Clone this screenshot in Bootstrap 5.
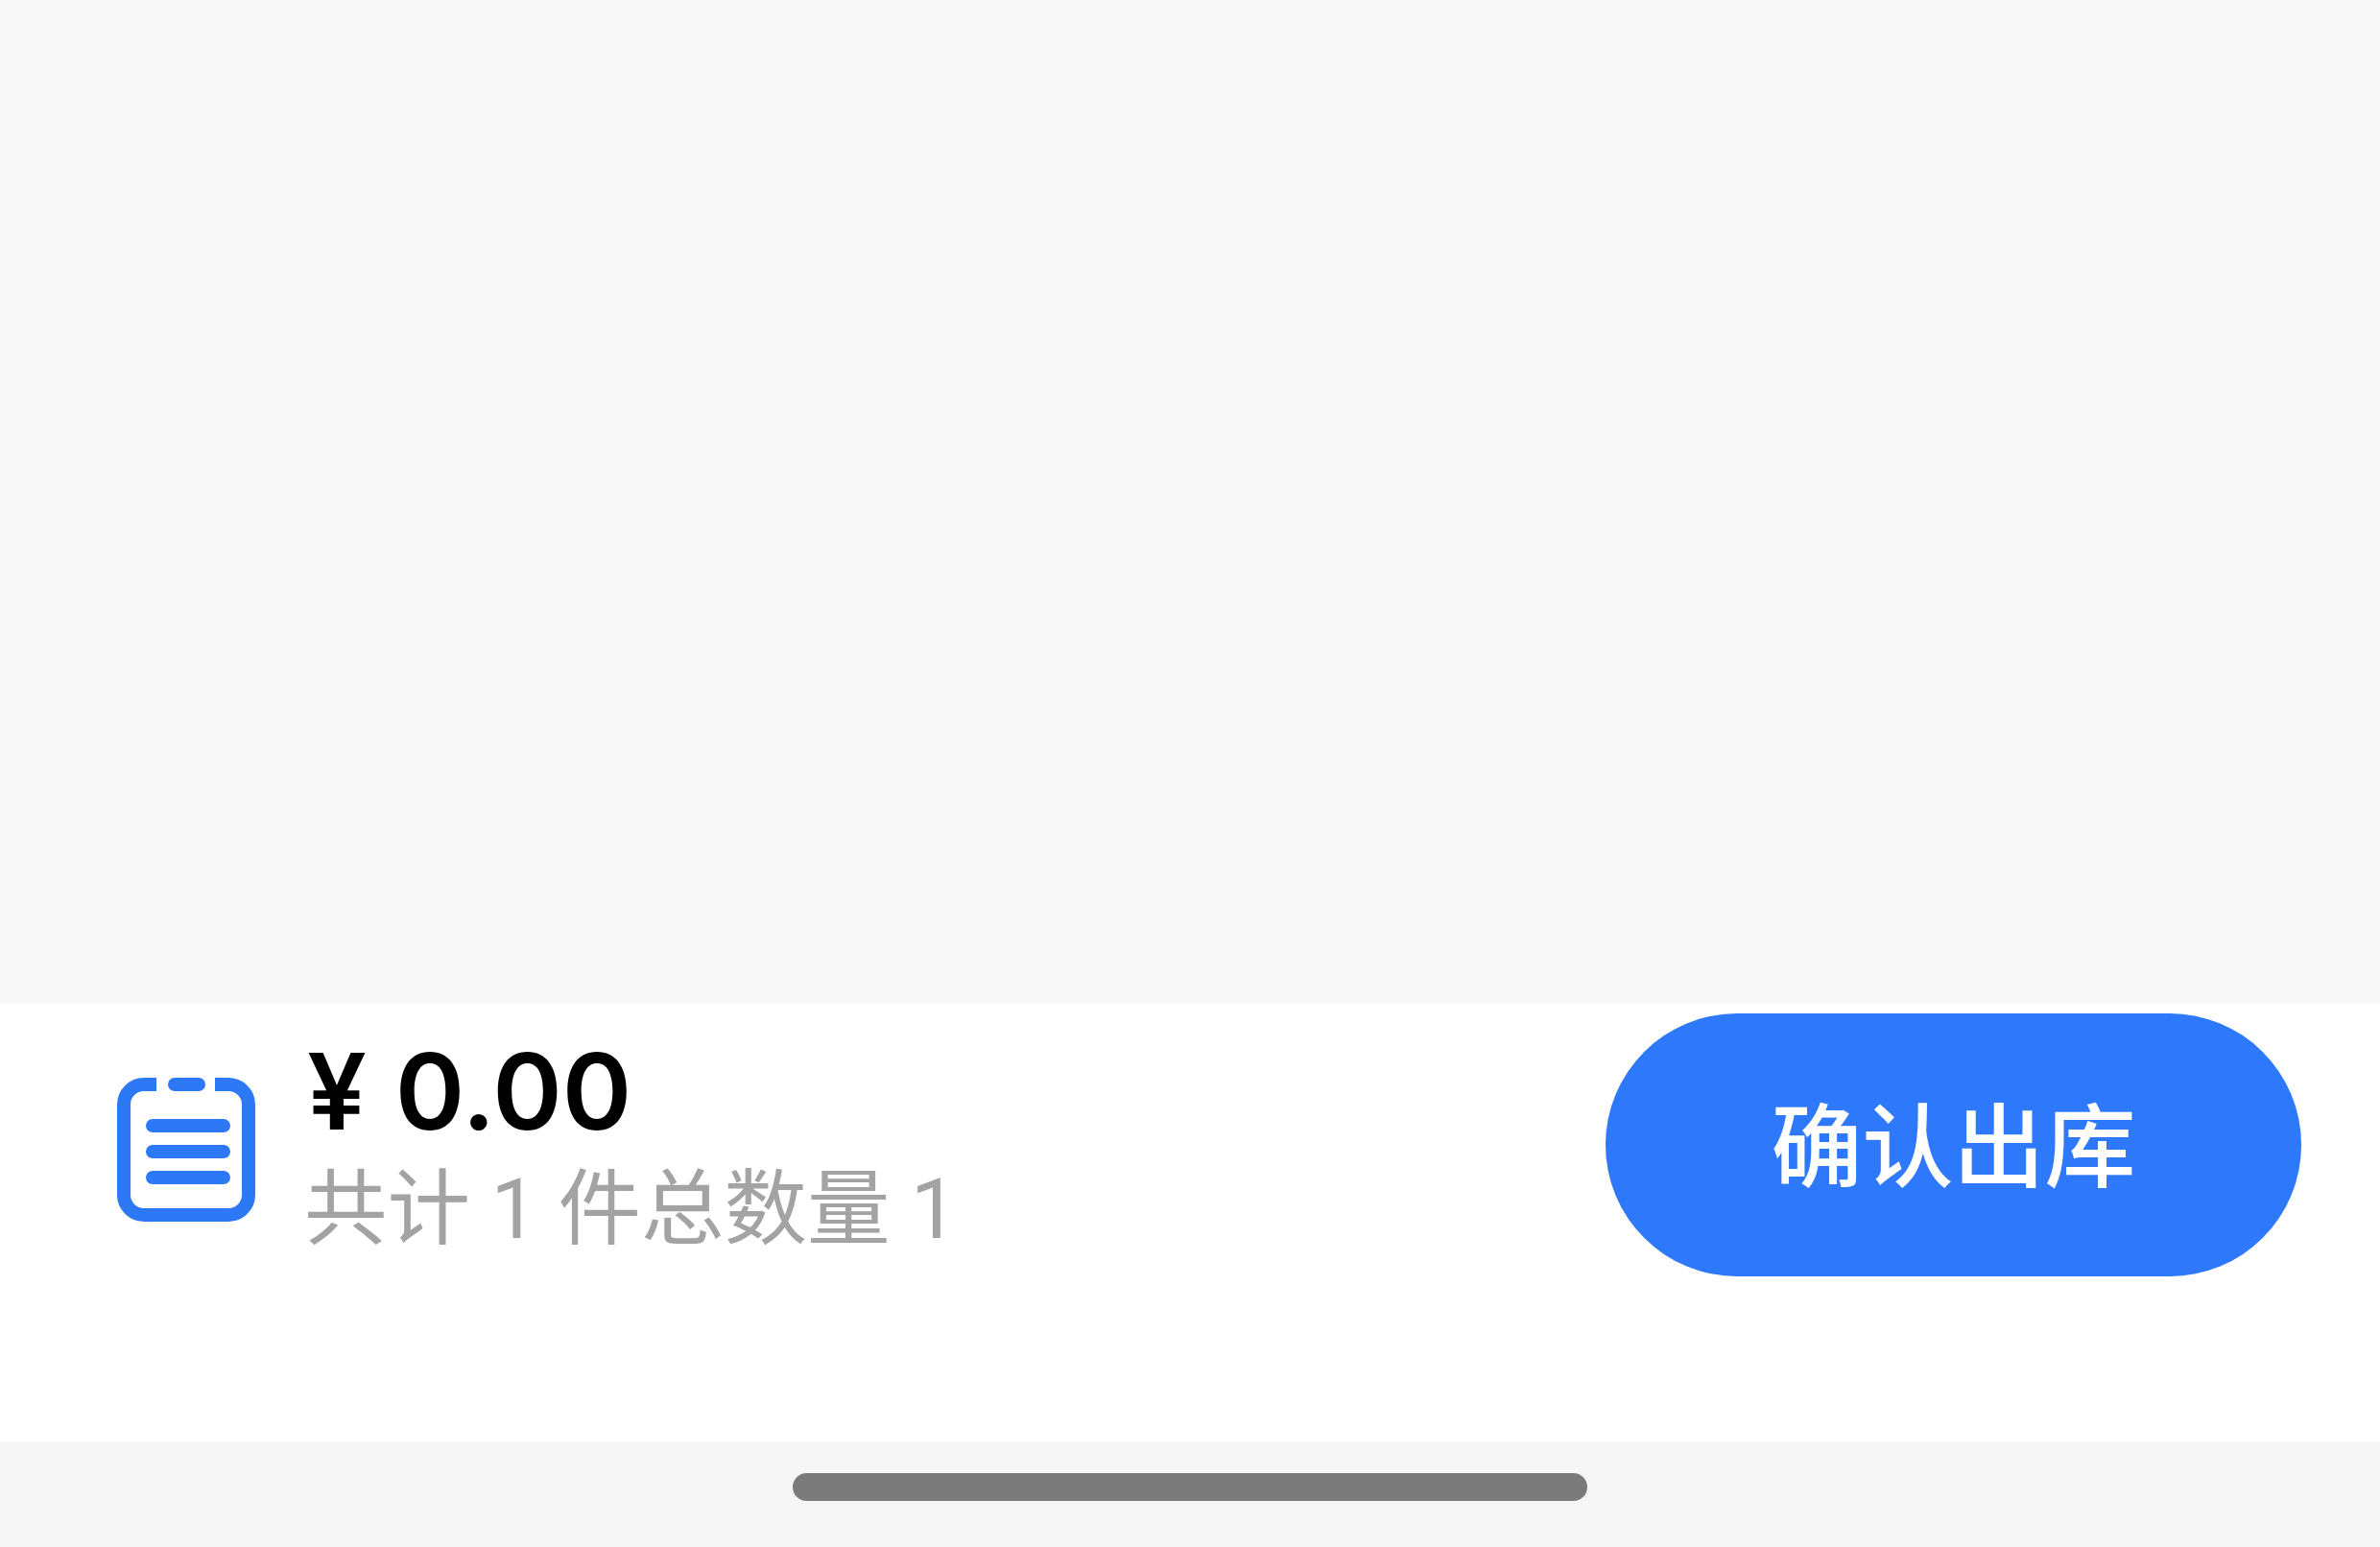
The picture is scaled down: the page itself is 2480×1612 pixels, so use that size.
<!DOCTYPE html>
<html lang="zh-CN">
<head>
<meta charset="utf-8">
<title>确认出库</title>
<link href="https://cdn.jsdelivr.net/npm/bootstrap@5.3.0/dist/css/bootstrap.min.css" rel="stylesheet">
<style>
html, body { height: 1612px; margin: 0; }
body { font-family: "Noto Sans CJK SC", "Noto Sans", sans-serif; background: #f8f8f8; }
.shell { height: 1612px; }
.upper { height: 1045px; background: #f8f8f8; }
.dock { height: 457px; background: #fff; padding: 11px 82px 0 122px; }
.doc-icon { width: 144px; height: 150px; margin-top: 67px; flex: none; }
.summary { margin-left: 54px; margin-top: 22px; }
.amount { font-size: 110px; line-height: 118px; font-weight: 600; color: #000; font-family: "Inter", "Noto Sans CJK SC", sans-serif; white-space: nowrap; word-spacing: 2px; }
.tally { font-family: "Roboto", "Noto Sans CJK SC", sans-serif; font-size: 86.500px; line-height: 110px; font-weight: 400; color: #a3a3a3; white-space: nowrap; margin-top: 10px; margin-left: -3px; }
.confirm { width: 725px; height: 274px; background: #2d78fb; border: 0; border-radius: 137px; color: #fff; font-size: 95px; font-weight: 500; line-height: 1; padding: 0 0 10px; }
.confirm:hover, .confirm:active { background: #2d78fb; color: #fff; }
.home-zone { height: 110px; background: #f6f6f6; padding-top: 33px; }
.home-bar { width: 828px; height: 29px; background: #7b7b7b; border-radius: 15px; }
</style>
</head>
<body>
<div class="shell d-flex flex-column">
  <div class="upper"></div>
  <div class="dock d-flex justify-content-between align-items-start">
    <div class="d-flex align-items-start">
      <svg class="doc-icon" viewBox="0 0 144 150" fill="none" stroke="#2d78f5" stroke-width="14" aria-hidden="true">
        <path d="M41 7H28A21 21 0 0 0 7 28V122A21 21 0 0 0 28 143H116A21 21 0 0 0 137 122V28A21 21 0 0 0 116 7H102"/>
        <path d="M60 7H85M37 50H111M37 77H111M37 104H111" stroke-linecap="round"/>
      </svg>
      <div class="summary">
        <div class="amount">¥ 0.00</div>
        <div class="tally">共计 1 件总数量 1</div>
      </div>
    </div>
    <button type="button" class="btn confirm">确认出库</button>
  </div>
  <div class="home-zone d-flex justify-content-center">
    <div class="home-bar"></div>
  </div>
</div>
<script src="https://cdn.jsdelivr.net/npm/bootstrap@5.3.0/dist/js/bootstrap.bundle.min.js"></script>
</body>
</html>
